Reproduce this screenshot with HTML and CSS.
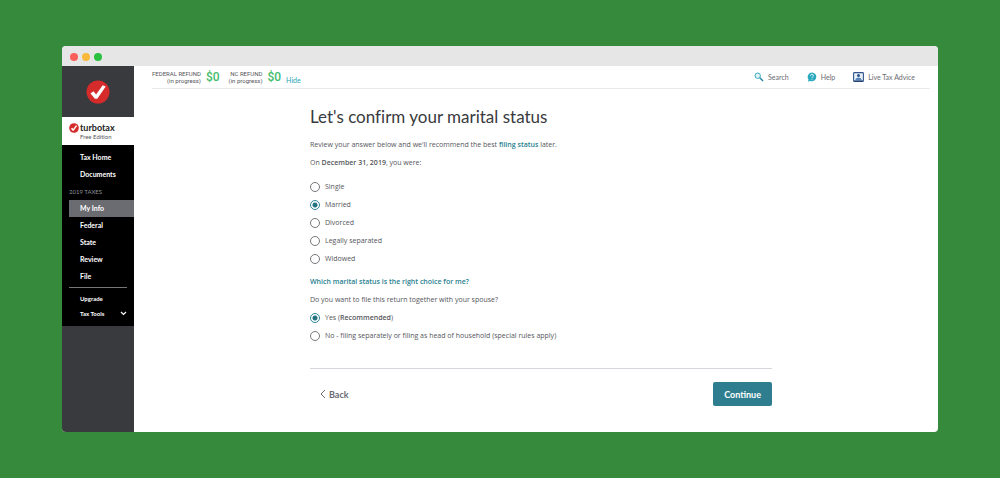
FILE: index.html
```
<!DOCTYPE html>
<html lang="en">
<head>
  <meta charset="utf-8">
  <title>TurboTax Free Edition</title>
  <link rel="stylesheet" href="styles.css">
</head>

<body>
  <div class="window">
    <div class="title-bar">
      <span class="dot red"></span>
      <span class="dot yellow"></span>
      <span class="dot green"></span>
    </div>

    <div class="app">
      <aside class="sidebar">
        <div class="logo">
          <svg width="24" height="24" viewBox="0 0 24 24">
            <circle cx="12" cy="12" r="11.5" fill="#d52b2b"/>
            <path d="M4.5 13.5l3-2.2 2.6 3.2 6.6-9.3 3 1.2-8.4 12.3-2.4.1z" fill="#fff"/>
          </svg>
        </div>

        <div class="brand">
          <svg width="10" height="10" viewBox="0 0 24 24">
            <circle cx="12" cy="12" r="11.5" fill="#d52b2b"/>
            <path d="M4.5 13.5l3-2.2 2.6 3.2 6.6-9.3 3 1.2-8.4 12.3-2.4.1z" fill="#fff"/>
          </svg>
          <div>
            <div class="brand-name">turbotax</div>
            <div class="brand-edition">Free Edition</div>
          </div>
        </div>

        <nav class="menu">
          <a href="#">Tax Home</a>
          <a href="#">Documents</a>
          <h2>2019 TAXES</h2>
          <a href="#" class="active">My Info</a>
          <a href="#">Federal</a>
          <a href="#">State</a>
          <a href="#">Review</a>
          <a href="#">File</a>
          <div class="menu-tools">
            <a href="#">Upgrade</a>
            <a href="#">Tax Tools
              <svg width="7" height="7" viewBox="0 0 7 7"><path d="M1 2l2.5 2.5L6 2" fill="none" stroke="#fff" stroke-width="1.2"/></svg>
            </a>
          </div>
        </nav>
      </aside>

      <main class="main">
        <header class="top-bar">
          <div class="refunds">
            <div class="refund">
              <div class="refund-label">FEDERAL REFUND<br>(in progress)</div>
              <div class="amount">$0</div>
            </div>
            <div class="refund">
              <div class="refund-label">NC REFUND<br>(in progress)</div>
              <div class="amount">$0</div>
            </div>
            <a href="#" class="hide">Hide</a>
          </div>

          <div class="help-links">
            <a href="#">
              <svg width="10" height="10" viewBox="0 0 10 10">
                <circle cx="3.7" cy="3.7" r="2.7" fill="#e4f5f8" stroke="#36aabf" stroke-width="1"/>
                <path d="M5.8 5.8L9 9" stroke="#2588a6" stroke-width="1.5"/>
              </svg>
              Search
            </a>
            <a href="#">
              <svg width="10" height="10" viewBox="0 0 10 10">
                <path d="M5 .6a4.3 4.3 0 1 1-1.3 8.4L1 9.5l.5-2.1A4.3 4.3 0 0 1 5 .6z" fill="#29a9bd"/>
                <path d="M3.6 3.7a1.4 1.4 0 1 1 2 1.2c-.5.3-.6.5-.6 1" fill="none" stroke="#fff" stroke-width=".9"/>
                <circle cx="5" cy="7.3" r=".5" fill="#fff"/>
              </svg>
              Help
            </a>
            <a href="#">
              <svg width="11" height="10" viewBox="0 0 11 10">
                <rect x=".6" y=".6" width="9.8" height="8.4" rx=".8" fill="#e8f1fa" stroke="#31558b" stroke-width="1.1"/>
                <circle cx="5.5" cy="3.5" r="1.5" fill="#31558b"/>
                <path d="M2.3 8.4c.2-2 1.5-2.8 3.2-2.8s3 .8 3.2 2.8z" fill="#5b86b9"/>
                <path d="M.6 9.4h9.8" stroke="#24406f" stroke-width="1.1"/>
              </svg>
              Live Tax Advice
            </a>
          </div>
        </header>

        <form class="question">
          <h1>Let's confirm your marital status</h1>
          <p>Review your answer below and we'll recommend the best <a href="#">filing status</a> later.</p>
          <p class="label" id="status-label">On <b>December 31, 2019</b>, you were:</p>

          <div class="options status" role="radiogroup" aria-labelledby="status-label">
            <label><input type="radio" name="status">Single</label>
            <label><input type="radio" name="status" checked>Married</label>
            <label><input type="radio" name="status">Divorced</label>
            <label><input type="radio" name="status">Legally separated</label>
            <label><input type="radio" name="status">Widowed</label>
          </div>

          <p><a href="#">Which marital status is the right choice for me?</a></p>
          <p class="label" id="filing-label">Do you want to file this return together with your spouse?</p>

          <div class="options" role="radiogroup" aria-labelledby="filing-label">
            <label><input type="radio" name="filing" checked><span>Yes (<b>Recommended</b>)</span></label>
            <label><input type="radio" name="filing">No - filing separately or filing as head of household (special rules apply)</label>
          </div>

          <div class="actions">
            <button type="button" class="back">
              <svg width="6" height="10" viewBox="0 0 6 10"><path d="M5 1L1 5l4 4" fill="none" stroke="#6b6c72" stroke-width="1"/></svg>
              Back
            </button>
            <button type="button" class="continue">Continue</button>
          </div>
        </form>
      </main>
    </div>
  </div>
</body>
</html>
```

FILE: styles.css
```
* {
  box-sizing: border-box;
  margin: 0;
  padding: 0;
}

body {
  display: flex;
  min-height: 100vh;
  padding: 46px 62px;
  background: #358a3b;
  color: #55565b;
  font-family: Lato, sans-serif;
  font-size: 7px;
  font-variant-ligatures: none;
  line-height: 10px;
}

a {
  color: #28808f;
  text-decoration: none;
}

svg {
  flex: none;
}

.window {
  display: flex;
  flex: 1;
  flex-direction: column;
  overflow: hidden;
  border-radius: 4px;
  background: #fff;
}

.title-bar {
  display: flex;
  align-items: center;
  gap: 4px;
  height: 20px;
  padding: 2px 8px 0;
  background: #e6e6e6;
}

.dot {
  width: 8px;
  height: 8px;
  border-radius: 50%;
}

.red {
  background: #fb5f5c;
}

.yellow {
  background: #f8b93c;
}

.green {
  background: #2bc140;
}

.app {
  display: flex;
  flex: 1;
}

/* sidebar */
.sidebar {
  width: 72px;
  background: #393a3d;
}

.logo {
  display: flex;
  align-items: center;
  justify-content: center;
  height: 51px;
}

.brand {
  display: flex;
  gap: 1px;
  height: 28px;
  padding: 6px 7px;
  background: #fff;
}

.brand-name {
  color: #222;
  font-size: 9px;
  font-weight: bold;
}

.brand-edition {
  font-size: 6px;
  line-height: 7px;
}

.menu {
  padding: 4px 0 5px 7px;
  background: #000;
}

.menu a {
  display: block;
  padding-left: 11px;
  color: #fff;
  font-weight: bold;
  line-height: 17px;
}

.menu h2 {
  color: #8d9096;
  font-size: 6px;
  font-weight: normal;
  line-height: 17px;
}

.menu .active {
  background: #6b6c72;
}

.menu-tools {
  margin: 2px 7px 0 0;
  padding-top: 3px;
  border-top: 1px solid #777;
}

.menu-tools a {
  display: flex;
  align-items: center;
  justify-content: space-between;
  font-size: 6px;
  line-height: 15px;
}

/* main area */
.main {
  flex: 1;
  padding: 0 8px 0 18px;
}

.top-bar {
  display: flex;
  justify-content: space-between;
  height: 23px;
  border-bottom: 1px solid #e8e9eb;
}

.refunds,
.refund,
.help-links,
.help-links a {
  display: flex;
  align-items: center;
}

.refunds {
  gap: 9px;
}

.refund {
  gap: 5px;
}

.refund-label {
  font-family: Roboto, sans-serif;
  font-size: 6px;
  line-height: 7px;
  text-align: right;
}

.amount {
  color: #43bd6b;
  font-family: Roboto, sans-serif;
  font-size: 12px;
  font-weight: 500;
}

.hide {
  padding-top: 5px;
  margin-left: -4px;
  color: #28a4b6;
}

.help-links {
  gap: 18px;
  padding-right: 15px;
}

.help-links a {
  gap: 4px;
  color: #6b6c72;
}

.question {
  max-width: 462px;
  margin: 0 auto;
  padding-top: 17px;
}

h1 {
  margin-bottom: 12px;
  color: #393a3d;
  font-size: 17px;
  font-weight: normal;
  line-height: 22px;
}

.question p,
.options {
  font-family: "Open Sans", sans-serif;
}

.question p {
  margin-bottom: 8px;
}

.question .label {
  margin-bottom: 4px;
}

.question p a {
  font-weight: 600;
}

.options label {
  display: flex;
  align-items: center;
  gap: 5px;
  height: 18px;
}

.status {
  padding: 6px 0 9px;
}

.options input {
  width: 10px;
  height: 10px;
  appearance: none;
  border: 1px solid #77787d;
  border-radius: 50%;
}

.options input:checked {
  border-color: #2d8796;
  background: radial-gradient(circle, #24717f 2px, #fff 3px);
}

.options b,
.label b {
  font-weight: 600;
}

.actions {
  display: flex;
  align-items: center;
  justify-content: space-between;
  margin-top: 23px;
  padding: 13px 0 0 10px;
  border-top: 1px solid #d4d7dc;
}

button {
  border: 0;
  font-family: inherit;
  font-size: 9px;
  font-weight: bold;
}

.back {
  display: flex;
  align-items: center;
  gap: 3px;
  background: none;
  color: #6b6c72;
}

.continue {
  height: 24px;
  padding: 0 11px;
  border-radius: 2px;
  background: #2f7e8f;
  color: #fff;
}
```
